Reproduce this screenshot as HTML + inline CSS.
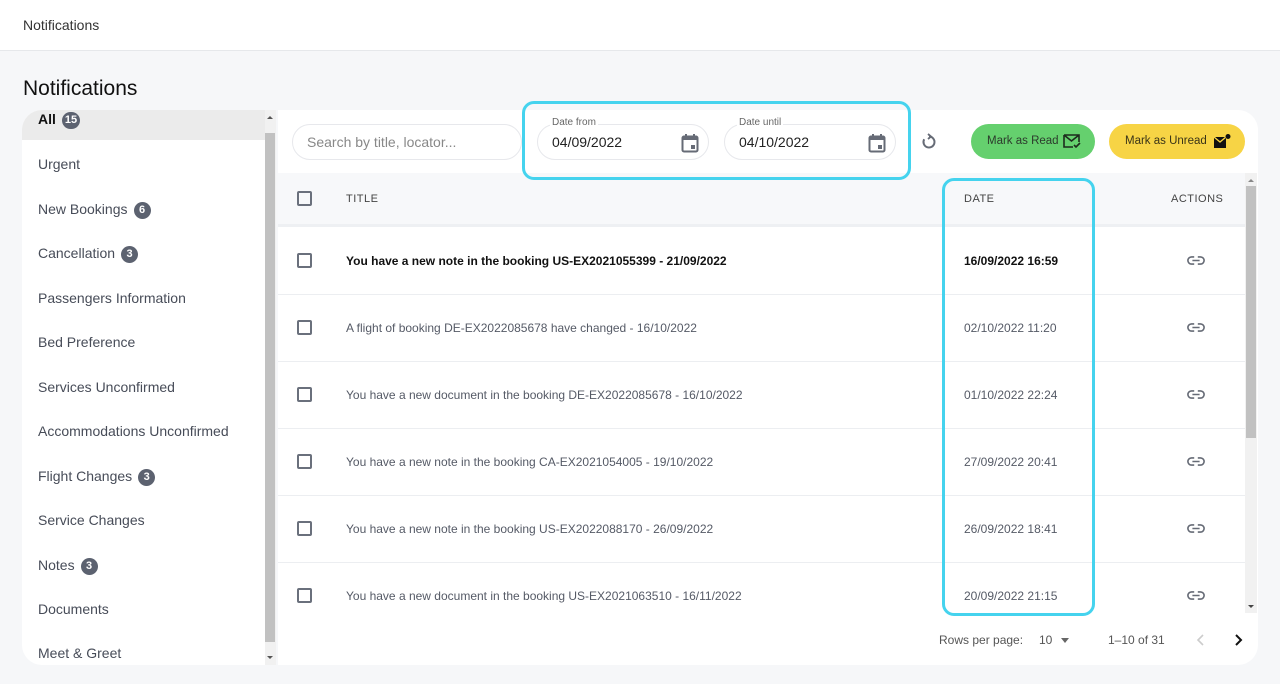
<!DOCTYPE html>
<html><head><meta charset="utf-8"><style>
*{box-sizing:border-box;margin:0;padding:0}
body{width:1280px;height:684px;background:#f6f7f9;font-family:"Liberation Sans",sans-serif;position:relative;overflow:hidden;color:#3d4250}
.a{position:absolute}
.hdr{left:0;top:0;width:1280px;height:51px;background:#fff;border-bottom:1px solid #e6e8eb}
.side{left:22px;top:110px;width:254px;height:555px;background:#fff;border-radius:20px 0 0 20px;overflow:hidden}
.item{position:absolute;left:16px;font-size:14px;color:#474c58}
.badge{display:inline-block;background:#5c6270;color:#fff;border-radius:9px;font-size:11px;font-weight:bold;height:17px;min-width:17px;line-height:17px;text-align:center;padding:0 3px;margin-left:6px;vertical-align:1px}
.main{left:278px;top:110px;width:980px;height:555px;background:#fff;border-radius:0 20px 20px 0}
.inp{position:absolute;border:1px solid #e7e8ec;border-radius:18px;height:36px;background:#fff}
.lbl{position:absolute;top:-8px;left:12px;background:#fff;padding:0 2px;font-size:10px;color:#666}
.val{position:absolute;left:14px;top:9px;font-size:14px;color:#222}
.row{position:absolute;left:278px;width:968px;border-bottom:1px solid #eceef1}
.cb{position:absolute;left:19px;width:15px;height:15px;border:2px solid #6a707c;border-radius:2px}
.t{position:absolute;left:68px;font-size:12px;color:#555a66}
.d{position:absolute;left:686px;font-size:12px;color:#555a66}
.b .t,.b .d{font-weight:bold;color:#111}
.lk{position:absolute;left:909px}
.hl{position:absolute;border:3px solid #45d3ee;border-radius:12px}
</style></head><body>
<div class="a hdr"><div class="a" style="left:23px;top:17px;font-size:14px;color:#333">Notifications</div></div>
<div class="a" style="left:23px;top:77px;font-size:21px;color:#111">Notifications</div>

<div class="a side">
<div class="a" style="left:0;top:0;width:243px;height:30px;background:#ebebeb"></div>
<div class="item" style="top:1px;font-weight:bold;color:#111">All<span class="badge">15</span></div>
<div class="item" style="top:46px">Urgent</div>
<div class="item" style="top:91px">New Bookings<span class="badge">6</span></div>
<div class="item" style="top:135px">Cancellation<span class="badge">3</span></div>
<div class="item" style="top:180px">Passengers Information</div>
<div class="item" style="top:224px">Bed Preference</div>
<div class="item" style="top:269px">Services Unconfirmed</div>
<div class="item" style="top:313px">Accommodations Unconfirmed</div>
<div class="item" style="top:358px">Flight Changes<span class="badge">3</span></div>
<div class="item" style="top:402px">Service Changes</div>
<div class="item" style="top:447px">Notes<span class="badge">3</span></div>
<div class="item" style="top:491px">Documents</div>
<div class="item" style="top:535px">Meet &amp; Greet</div>
<div class="a" style="left:243px;top:0;width:11px;height:555px;background:#f1f1f1"></div>
<div class="a" style="left:243px;top:23px;width:10px;height:509px;background:#c1c1c1"></div>
<div class="a" style="left:245px;top:6px;border:3px solid transparent;border-bottom-color:#555;border-top:0"></div>
<div class="a" style="left:245px;top:546px;border:3px solid transparent;border-top-color:#555;border-bottom:0"></div>
</div>

<div class="a main"></div>
<div class="inp" style="left:292px;top:124px;width:230px"><div class="val" style="color:#888">Search by title, locator...</div></div>
<div class="inp" style="left:537px;top:124px;width:172px"><div class="lbl">Date from</div><div class="val">04/09/2022</div>
<svg class="a" style="left:143px;top:8px" width="18" height="20" viewBox="0 0 18 20"><rect x="1.5" y="3.5" width="15" height="15" rx="1.5" fill="none" stroke="#666b76" stroke-width="2"/><rect x="1.5" y="3.5" width="15" height="3.5" fill="#666b76"/><rect x="4" y="1" width="2" height="4" fill="#666b76"/><rect x="12" y="1" width="2" height="4" fill="#666b76"/><rect x="10" y="12" width="4" height="4" fill="#666b76"/></svg></div>
<div class="inp" style="left:724px;top:124px;width:172px"><div class="lbl">Date until</div><div class="val">04/10/2022</div>
<svg class="a" style="left:143px;top:8px" width="18" height="20" viewBox="0 0 18 20"><rect x="1.5" y="3.5" width="15" height="15" rx="1.5" fill="none" stroke="#666b76" stroke-width="2"/><rect x="1.5" y="3.5" width="15" height="3.5" fill="#666b76"/><rect x="4" y="1" width="2" height="4" fill="#666b76"/><rect x="12" y="1" width="2" height="4" fill="#666b76"/><rect x="10" y="12" width="4" height="4" fill="#666b76"/></svg></div>
<svg class="a" style="left:920px;top:133px" width="18" height="18" viewBox="0 0 18 18"><path d="M9 3.5 A5.5 5.5 0 1 1 4.2 6.3" fill="none" stroke="#666b76" stroke-width="2"/><path d="M8 1 L11 3.5 L8 6" fill="none" stroke="#666b76" stroke-width="1.8"/></svg>
<div class="a" style="left:971px;top:124px;width:124px;height:35px;border-radius:18px;background:#65d06e;font-size:11.5px;color:#2c3a2c;line-height:35px;padding-left:16px">Mark as Read
<svg class="a" style="left:92px;top:10px" width="18" height="15" viewBox="0 0 18 15"><path d="M1 1H16V8M1 1V13H10M1 1L8.5 7L16 1M11 11L13 13L17 9" fill="none" stroke="#1d2b1d" stroke-width="1.6"/></svg></div>
<div class="a" style="left:1109px;top:124px;width:136px;height:35px;border-radius:18px;background:#f7d445;font-size:11.5px;color:#3a3418;line-height:35px;padding-left:16px">Mark as Unread
<svg class="a" style="left:104px;top:10px" width="18" height="15" viewBox="0 0 18 15"><path d="M1 3H13V14H1Z" fill="#111"/><path d="M1 3L7 8L13 3" fill="none" stroke="#f7d445" stroke-width="1.4"/><circle cx="15" cy="2.5" r="2.5" fill="#111"/></svg></div>

<div class="row" style="top:173px;height:54px;background:#f7f8fa;border-bottom:3px solid #eef0f3">
<div class="cb" style="top:18px"></div><div class="t" style="top:20px;font-size:11px;letter-spacing:.5px;color:#444">TITLE</div><div class="d" style="top:20px;font-size:11px;letter-spacing:.5px;color:#444">DATE</div><div class="a" style="left:893px;top:20px;font-size:11px;letter-spacing:.5px;color:#444">ACTIONS</div></div>

<div class="row b" style="top:227px;height:68px"><div class="cb" style="top:26px"></div><div class="t" style="top:27px">You have a new note in the booking US-EX2021055399 - 21/09/2022</div><div class="d" style="top:27px">16/09/2022 16:59</div><svg class="lk" style="top:29px" width="18" height="9" viewBox="0 0 20 10"><path d="M8 1H5A4 4 0 0 0 5 9H8M12 1H15A4 4 0 0 1 15 9H12M6 5H14" fill="none" stroke="#666b76" stroke-width="1.8"/></svg></div>
<div class="row" style="top:295px;height:67px"><div class="cb" style="top:25px"></div><div class="t" style="top:26px">A flight of booking DE-EX2022085678 have changed - 16/10/2022</div><div class="d" style="top:26px">02/10/2022 11:20</div><svg class="lk" style="top:28px" width="18" height="9" viewBox="0 0 20 10"><path d="M8 1H5A4 4 0 0 0 5 9H8M12 1H15A4 4 0 0 1 15 9H12M6 5H14" fill="none" stroke="#666b76" stroke-width="1.8"/></svg></div>
<div class="row" style="top:362px;height:67px"><div class="cb" style="top:25px"></div><div class="t" style="top:26px">You have a new document in the booking DE-EX2022085678 - 16/10/2022</div><div class="d" style="top:26px">01/10/2022 22:24</div><svg class="lk" style="top:28px" width="18" height="9" viewBox="0 0 20 10"><path d="M8 1H5A4 4 0 0 0 5 9H8M12 1H15A4 4 0 0 1 15 9H12M6 5H14" fill="none" stroke="#666b76" stroke-width="1.8"/></svg></div>
<div class="row" style="top:429px;height:67px"><div class="cb" style="top:25px"></div><div class="t" style="top:26px">You have a new note in the booking CA-EX2021054005 - 19/10/2022</div><div class="d" style="top:26px">27/09/2022 20:41</div><svg class="lk" style="top:28px" width="18" height="9" viewBox="0 0 20 10"><path d="M8 1H5A4 4 0 0 0 5 9H8M12 1H15A4 4 0 0 1 15 9H12M6 5H14" fill="none" stroke="#666b76" stroke-width="1.8"/></svg></div>
<div class="row" style="top:496px;height:67px"><div class="cb" style="top:25px"></div><div class="t" style="top:26px">You have a new note in the booking US-EX2022088170 - 26/09/2022</div><div class="d" style="top:26px">26/09/2022 18:41</div><svg class="lk" style="top:28px" width="18" height="9" viewBox="0 0 20 10"><path d="M8 1H5A4 4 0 0 0 5 9H8M12 1H15A4 4 0 0 1 15 9H12M6 5H14" fill="none" stroke="#666b76" stroke-width="1.8"/></svg></div>
<div class="row" style="top:563px;height:50px;border:0"><div class="cb" style="top:25px"></div><div class="t" style="top:26px">You have a new document in the booking US-EX2021063510 - 16/11/2022</div><div class="d" style="top:26px">20/09/2022 21:15</div><svg class="lk" style="top:28px" width="18" height="9" viewBox="0 0 20 10"><path d="M8 1H5A4 4 0 0 0 5 9H8M12 1H15A4 4 0 0 1 15 9H12M6 5H14" fill="none" stroke="#666b76" stroke-width="1.8"/></svg></div>

<div class="a" style="left:1245px;top:173px;width:12px;height:440px;background:#f1f1f1"></div>
<div class="a" style="left:1246px;top:186px;width:10px;height:252px;background:#c1c1c1"></div>
<div class="a" style="left:1248px;top:179px;border:3px solid transparent;border-bottom-color:#888;border-top:0"></div>
<div class="a" style="left:1248px;top:605px;border:3px solid transparent;border-top-color:#444;border-bottom:0"></div>

<div class="a" style="left:939px;top:633px;font-size:12px;color:#555">Rows per page:</div>
<div class="a" style="left:1039px;top:633px;font-size:12px;color:#555">10</div>
<div class="a" style="left:1061px;top:638px;border:4px solid transparent;border-top:5px solid #666;border-bottom:0"></div>
<div class="a" style="left:1108px;top:633px;font-size:12px;color:#555">1–10 of 31</div>
<svg class="a" style="left:1196px;top:633px" width="10" height="14"><path d="M7 2L2 7L7 12" fill="none" stroke="#ccc" stroke-width="1.6"/></svg>
<svg class="a" style="left:1233px;top:633px" width="10" height="14"><path d="M3 2L8 7L3 12" fill="none" stroke="#111" stroke-width="2"/></svg>

<div class="hl" style="left:522px;top:101px;width:389px;height:79px"></div>
<div class="hl" style="left:942px;top:178px;width:153px;height:438px"></div>
</body></html>
